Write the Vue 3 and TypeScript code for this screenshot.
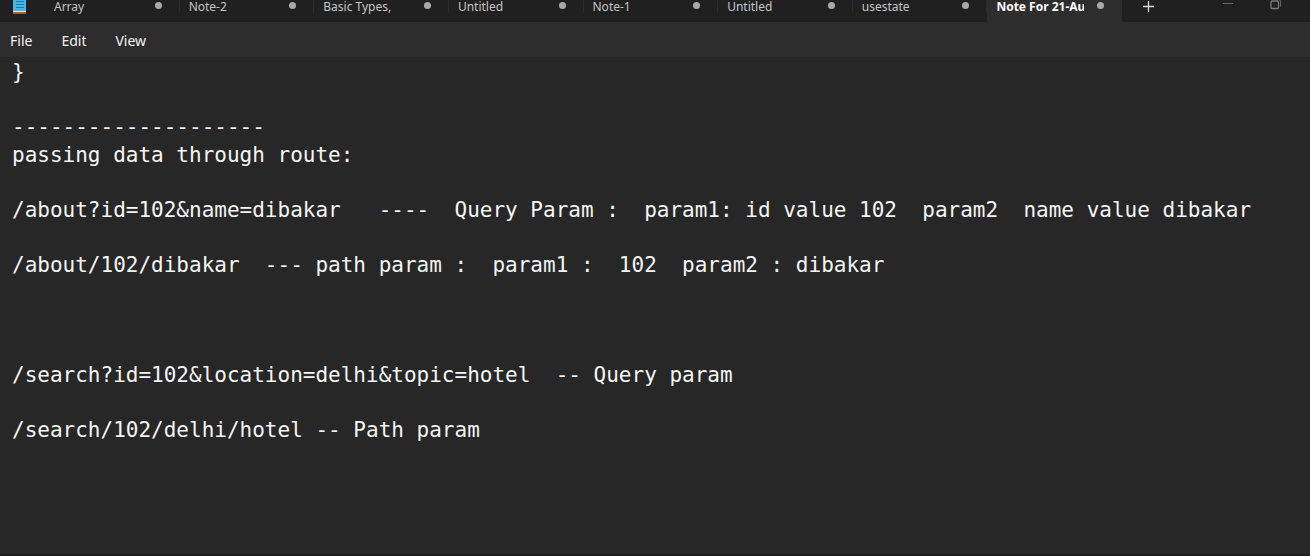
<script setup lang="ts">
import { ref } from 'vue'

interface Tab {
  id: number
  title: string
}

const tabs: Tab[] = [
  'Array',
  'Note-2',
  'Basic Types,',
  'Untitled',
  'Note-1',
  'Untitled',
  'usestate',
  'Note For 21-Aug',
].map((title, id) => ({ id, title }))

const active = ref(7)
const menus: string[] = ['File', 'Edit', 'View']

const note = ref(
  [
    '}',
    '',
    '--------------------',
    'passing data through route:',
    '',
    '/about?id=102&name=dibakar   ----  Query Param :  param1: id value 102  param2  name value dibakar',
    '',
    '/about/102/dibakar  --- path param :  param1 :  102  param2 : dibakar',
    '',
    '',
    '',
    '/search?id=102&location=delhi&topic=hotel  -- Query param',
    '',
    '/search/102/delhi/hotel -- Path param',
  ].join('\n'),
)
</script>

<template>
  <div class="window">
    <header class="titlebar">
      <div class="logo">
        <svg width="14" height="14" viewBox="0 0 14 14" aria-hidden="true">
          <rect x="0" y="0" width="13" height="11" fill="#43b9e8" />
          <path d="M3 1.5h8M3 4.5h8M3 7.5h8" stroke="#1a78ab" stroke-width="1.2" />
          <rect x="0" y="11" width="13" height="1" fill="#e8e4df" />
          <rect x="0" y="12" width="13" height="2" fill="#a9602c" />
        </svg>
      </div>
      <nav class="tabs" aria-label="Open notes">
        <button
          v-for="tab in tabs"
          :key="tab.id"
          type="button"
          class="tab"
          :class="{ active: tab.id === active }"
          @click="active = tab.id"
        >
          <span class="title">{{ tab.title }}</span>
          <span class="dot"></span>
        </button>
      </nav>
      <button type="button" class="add" aria-label="New tab">
        <svg width="11" height="11" viewBox="0 0 11 11" aria-hidden="true">
          <path d="M5.5 0v11M0 5.5h11" stroke="#d8d8d8" stroke-width="1.3" />
        </svg>
      </button>
      <div class="controls">
        <button type="button" class="control" aria-label="Minimize">
          <svg width="12" height="12" viewBox="0 0 12 12" aria-hidden="true">
            <path d="M1 5.5h10" stroke="#646464" />
          </svg>
        </button>
        <button type="button" class="control" aria-label="Restore">
          <svg width="12" height="12" viewBox="0 0 12 12" fill="none" stroke="#7a7a7a" aria-hidden="true">
            <rect x="1" y="3" width="7.5" height="7.5" rx="1" stroke-width="1.3" />
            <path d="M3 1.5h5.5q2 0 2 2v5" stroke="#666666" />
          </svg>
        </button>
      </div>
    </header>

    <nav class="menubar" aria-label="Menu">
      <button v-for="menu in menus" :key="menu" type="button" class="menu">{{ menu }}</button>
    </nav>

    <textarea v-model="note" class="editor" aria-label="Note text" spellcheck="false" wrap="off"></textarea>
  </div>
</template>

<style>
body {
  margin: 0;
  background: #272727;
}
</style>

<style scoped>
.window {
  display: flex;
  flex-direction: column;
  min-height: 100vh;
  box-sizing: border-box;
  border-bottom: 2px solid #211f20;
  background: #272727;
  font-family: 'Noto Sans', 'Open Sans', sans-serif;
}

button {
  margin: 0;
  padding: 0;
  border: 0;
  background: none;
  color: inherit;
  font: inherit;
}

.titlebar {
  display: flex;
  height: 22px;
  background: #202020;
  color: #c4c4c4;
  font-size: 12px;
  line-height: 14px;
}

.logo {
  flex: 0 0 45px;
  box-sizing: border-box;
  padding-left: 13px;
}

.logo svg {
  display: block;
}

.tabs {
  display: flex;
  flex: 0 1 1077px;
  min-width: 0;
}

.tab {
  display: flex;
  flex: 1 1 0;
  align-items: flex-start;
  justify-content: space-between;
  min-width: 0;
  padding: 0 18px 0 9px;
  background: linear-gradient(#2b2b2b, #2b2b2b) right top / 1px 13px no-repeat;
  text-align: left;
}

.tab.active {
  background: #2d2d2d;
  color: #ffffff;
  font-weight: 700;
}

.title {
  width: 88px;
  overflow-x: clip;
  overflow-y: visible;
  white-space: nowrap;
}

.dot {
  flex: none;
  width: 7px;
  height: 7px;
  margin-top: 2px;
  border-radius: 50%;
  background: #a8a8a8;
}

.add {
  display: flex;
  justify-content: center;
  width: 52px;
  padding-top: 1px;
}

.controls {
  display: flex;
  margin-left: auto;
  padding-right: 10px;
}

.control {
  display: flex;
  justify-content: center;
  width: 48px;
  margin-top: -2px;
}

.menubar {
  display: flex;
  gap: 29px;
  box-sizing: border-box;
  height: 35px;
  padding: 10px 10px 0;
  background: #2d2d2d;
  color: #f4f4f4;
  font-size: 14px;
  line-height: 18px;
}

.menu {
  height: 18px;
}

.editor {
  display: block;
  flex: 1;
  width: 100%;
  box-sizing: border-box;
  margin: 0;
  padding: 2px 12px;
  border: 0;
  outline: 0;
  resize: none;
  overflow: hidden;
  background: #272727;
  color: #f5f5f5;
  font-family: 'DejaVu Sans Mono', monospace;
  font-size: 21px;
  line-height: 1.31;
}
</style>
